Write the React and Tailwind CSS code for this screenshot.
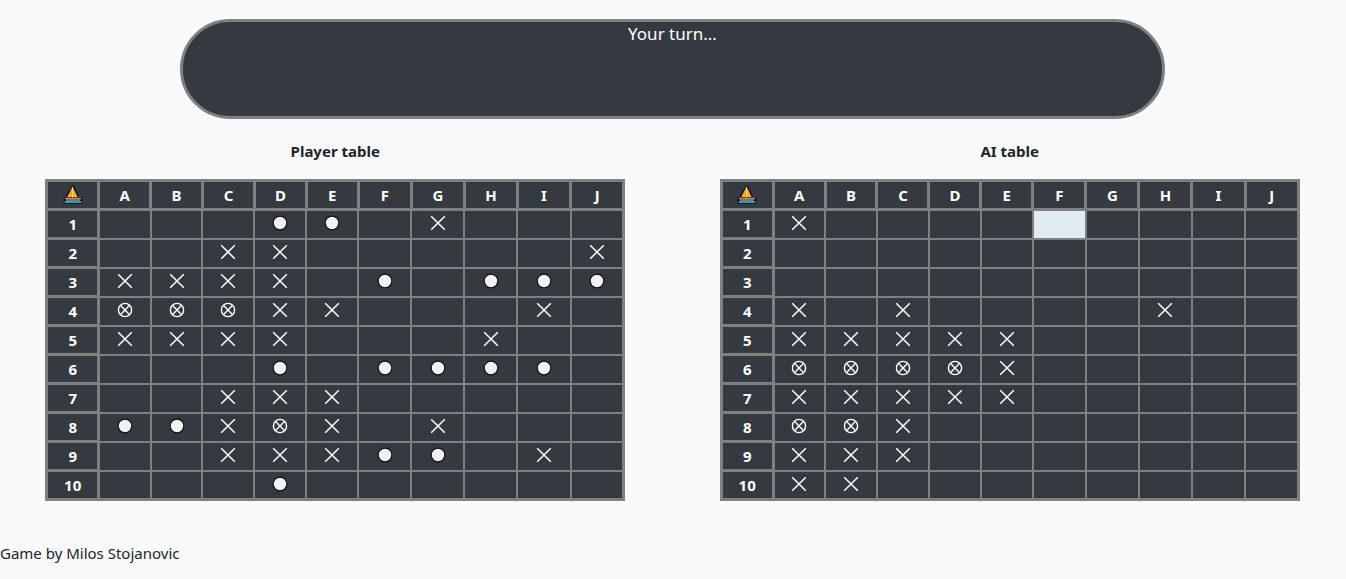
const COLUMNS = ['A', 'B', 'C', 'D', 'E', 'F', 'G', 'H', 'I', 'J'];

// x = miss, o = ship, h = hit ship, s = selected, . = empty
const PLAYER = [
  '...oo.x...',
  '..xx.....x',
  'xxxx.o.ooo',
  'hhhxx...x.',
  'xxxx...x..',
  '...o.oooo.',
  '..xxx.....',
  'ooxhx.x...',
  '..xxxoo.x.',
  '...o......',
];

const AI = [
  'x....s....',
  '..........',
  '..........',
  'x.x....x..',
  'xxxxx.....',
  'hhhhx.....',
  'xxxxx.....',
  'hhx.......',
  'xxx.......',
  'xx........',
];

const LABELS = { x: 'miss', o: 'ship', h: 'hit', s: 'empty', '.': 'empty' };

function Mark({ type }) {
  if (type === 'x') {
    return (
      <svg className="block h-4 w-4" viewBox="0 0 16 16" fill="none" stroke="#fff" strokeWidth="1.5" aria-hidden="true">
        <path d="M1.2 1.2 14.8 14.8M14.8 1.2 1.2 14.8" />
      </svg>
    );
  }
  if (type === 'h') {
    return (
      <svg className="block h-4 w-4" viewBox="0 0 16 16" fill="none" stroke="#fff" strokeWidth="1.4" aria-hidden="true">
        <circle cx="8" cy="8" r="6.6" />
        <path d="M3.6 3.6 12.4 12.4M12.4 3.6 3.6 12.4" />
      </svg>
    );
  }
  if (type === 'o') {
    return (
      <svg className="block h-4 w-4" viewBox="0 0 16 16" aria-hidden="true">
        <circle cx="8" cy="8" r="6.8" fill="#f2f2f2" stroke="#111" strokeWidth="1.2" />
      </svg>
    );
  }
  return null;
}

function Boat() {
  return (
    <svg className="mx-auto block h-5 w-5" viewBox="0 0 20 20" role="img" aria-label="Boat">
      <path d="M9 .8h1.8l4.6 9.8v1.3h3.8v7.2H.7v-7.2h2.4v-1.3z" fill="#0b0b0b" />
      <path d="M8.8 3v8.9H4.2z" fill="#fcb415" />
      <path d="M9.9 2.2 14.6 11.9H9.9z" fill="#fcb415" />
      <path d="M8.8 1.9h1.2v10.6H8.8z" fill="#e6d3b0" />
      <path d="M1.8 12.7H18.2l-1.6 3.4H3.2z" fill="#a56a43" />
      <path d="M1.8 12.7H18.2v1.1H1.8z" fill="#c98a60" />
      <path d="M1.6 16h16.8v2.1H1.6z" fill="#00a8e6" />
    </svg>
  );
}

function Board({ title, rows, playable }) {
  const heading = 'h-[29px] border-[3px] border-[#808080] p-0 text-center text-[15px] leading-5 font-bold';
  return (
    <section className="flex w-1/2 flex-col items-center">
      <h2 className="mb-4 text-[15px] leading-6 font-bold text-[#212529]">{title}</h2>
      <table className="w-[86%] table-fixed border-collapse border-[3px] border-[#808080] bg-[#343a40] text-white" aria-label={title}>
        <colgroup>
          <col span={6} className="w-[9%]" />
          <col span={5} className="w-[9.2%]" />
        </colgroup>
        <thead>
          <tr>
            <th className={heading}><Boat /></th>
            {COLUMNS.map((c) => (
              <th key={c} scope="col" className={heading}>{c}</th>
            ))}
          </tr>
        </thead>
        <tbody>
          {rows.map((row, r) => (
            <tr key={r}>
              <th scope="row" className={heading}>{r + 1}</th>
              {row.split('').map((type, c) => (
                <td
                  key={c}
                  className={`h-[29px] border-2 border-[#808080] p-0 ${type === 's' ? 'bg-[#e0ecf2]' : ''}`}
                >
                  {playable ? (
                    <button
                      type="button"
                      aria-label={`${COLUMNS[c]}${r + 1} ${LABELS[type]}`}
                      className="flex h-6 w-full cursor-pointer items-center justify-center pb-0.5"
                    >
                      <Mark type={type} />
                    </button>
                  ) : (
                    <div className="flex h-6 items-center justify-center pb-0.5"><Mark type={type} /></div>
                  )}
                </td>
              ))}
            </tr>
          ))}
        </tbody>
      </table>
    </section>
  );
}

export default function App() {
  return (
    <div className="min-h-screen overflow-hidden bg-[#f8fafc] font-['Noto_Sans',sans-serif]">
      <div className="-mr-px -ml-0.5 pt-[19px]">
        <div
          role="status"
          className="mx-auto h-[100px] w-[73%] rounded-full border-[3px] border-[#808080] bg-[#343a40] text-center text-[17px] leading-6 text-white"
        >
          Your turn...
        </div>
        <main className="mt-5 flex">
          <Board title="Player table" rows={PLAYER} />
          <Board title="AI table" rows={AI} playable />
        </main>
        <footer className="mt-10 pl-0.5 text-[15px] leading-6 text-[#212529]">
          Game by Milos Stojanovic
        </footer>
      </div>
    </div>
  );
}
